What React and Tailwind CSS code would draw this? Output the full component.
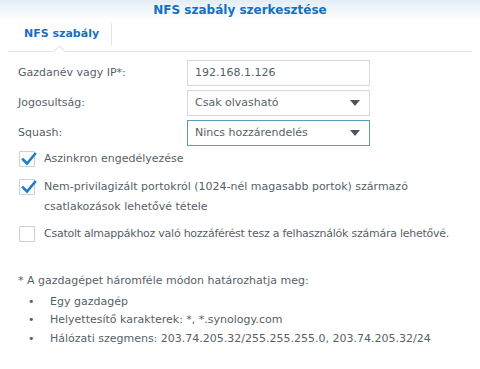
import React from "react";

const font = { fontFamily: '"DejaVu Sans", Verdana, sans-serif' };

function Check({ checked }) {
  return (
    <div className="w-[16px] h-[16px] border border-[#c9d0d6] bg-white relative shrink-0 rounded-[1px]">
      {checked && (
        <svg className="absolute left-[1px] top-[-1px]" width="16" height="16" viewBox="0 0 16 16">
          <path d="M2 8.5 L6 12.5 L14 3" fill="none" stroke="#1d7fcc" strokeWidth="2.6" strokeLinecap="square" />
        </svg>
      )}
    </div>
  );
}

function Caret() {
  return (
    <svg width="10" height="6" viewBox="0 0 10 6" className="shrink-0">
      <path d="M0 0 H10 L5 6 Z" fill="#4b5661" />
    </svg>
  );
}

export default function App() {
  return (
    <div className="w-[480px] h-[369px] bg-white text-[11px] text-[#565f69] overflow-hidden" style={font}>
      <div className="h-[20px] bg-gradient-to-b from-[#e3edf7] to-white flex items-center justify-center">
        <span className="text-[12px] font-bold text-[#1670be]">NFS szabály szerkesztése</span>
      </div>
      <div className="mx-[8px] h-[32px] border-b border-[#dfe3e7] flex items-start relative">
        <div className="flex items-center w-[104px] h-[22px] mt-[3px] pl-[16px] border-r border-[#e3e6e9]">
          <span className="text-[11px] font-bold text-[#1670be]">NFS szabály</span>
        </div>
        <div className="absolute left-[47px] bottom-[-5px] w-[9px] h-[9px] bg-white border-l border-t border-[#dfe3e7] rotate-45"></div>
      </div>
      <div className="px-[18px] pt-[8px]">
        <div className="flex flex-col gap-[4px]">
          <div className="flex items-center h-[26px]">
            <span className="w-[169px]">Gazdanév vagy IP*:</span>
            <div className="w-[183px] h-[26px] border border-[#d4d9de] flex items-center px-[7px]">192.168.1.126</div>
          </div>
          <div className="flex items-center h-[26px]">
            <span className="w-[169px]">Jogosultság:</span>
            <div className="w-[183px] h-[26px] border border-[#d4d9de] flex items-center justify-between pl-[7px] pr-[9px]">
              <span>Csak olvasható</span>
              <Caret />
            </div>
          </div>
          <div className="flex items-center h-[26px]">
            <span className="w-[169px]">Squash:</span>
            <div className="w-[183px] h-[26px] border border-[#5e9bb8] flex items-center justify-between pl-[7px] pr-[9px]">
              <span>Nincs hozzárendelés</span>
              <Caret />
            </div>
          </div>
        </div>
        <div className="mt-[4px] flex flex-col">
          <div className="flex items-center gap-[9px] h-[18px] pl-[1px]">
            <Check checked />
            <span>Aszinkron engedélyezése</span>
          </div>
          <div className="flex items-start gap-[9px] pl-[1px] mt-[9px]">
            <div className="pt-[2px]"><Check checked /></div>
            <span className="leading-[20px]">Nem-privilagizált portokról (1024-nél magasabb portok) származó<br />csatlakozások lehetővé tétele</span>
          </div>
          <div className="flex items-center gap-[9px] h-[18px] pl-[1px] mt-[8px]">
            <Check />
            <span className="whitespace-nowrap tracking-[-0.25px]">Csatolt almappákhoz való hozzáférést tesz a felhasználók számára lehetővé.</span>
          </div>
        </div>
        <div className="mt-[29px] leading-[18.5px]">
          <div>* A gazdagépet háromféle módon határozhatja meg:</div>
          <ul className="pl-[10px] mt-[2px]">
            <li className="flex"><span className="w-[22px]">•</span>Egy gazdagép</li>
            <li className="flex"><span className="w-[22px]">•</span>Helyettesítő karakterek: *, *.synology.com</li>
            <li className="flex"><span className="w-[22px]">•</span>Hálózati szegmens: 203.74.205.32/255.255.255.0, 203.74.205.32/24</li>
          </ul>
        </div>
      </div>
    </div>
  );
}
